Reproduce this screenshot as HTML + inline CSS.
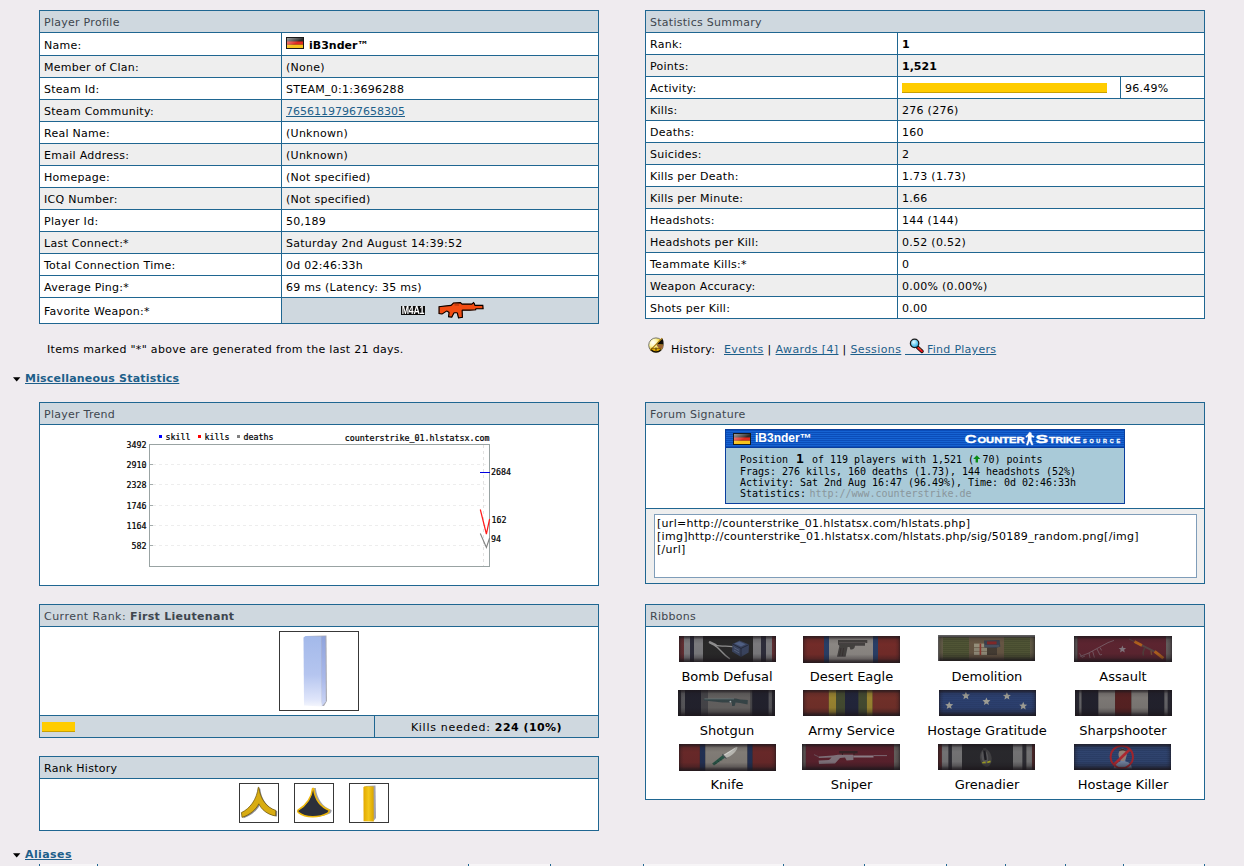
<!DOCTYPE html>
<html lang="en"><head><meta charset="utf-8"><title>Player Details</title>
<style>
html,body{margin:0;padding:0;}
body{width:1244px;height:866px;overflow:hidden;background:#efebef;position:relative;
 font-family:"DejaVu Sans","Liberation Sans",sans-serif;font-size:11px;color:#000;}
.r{position:absolute;}
.t,.h,.b,.rb{position:absolute;white-space:nowrap;line-height:13px;font-size:11px;letter-spacing:0.27px;}
.h{color:#3e464e;}
.b{font-weight:bold;letter-spacing:0;}
.rb{font-size:13px;line-height:16px;letter-spacing:0;text-align:center;}
a{color:#1d5f8a;text-decoration:underline;}
svg{position:absolute;overflow:visible;}
.m{font-family:"DejaVu Sans Mono","Liberation Mono",monospace;}
</style></head><body>

<div class="r" style="left:39px;top:10px;width:560px;height:314px;background:#1f6691;"></div>
<div class="r" style="left:40px;top:11px;width:558px;height:21px;background:#cfd8df;"></div>
<div class="h" style="left:44px;top:16px;">Player Profile</div>
<div class="r" style="left:40px;top:33px;width:241px;height:22px;background:#ffffff;"></div>
<div class="r" style="left:282px;top:33px;width:316px;height:22px;background:#ffffff;"></div>
<div class="t" style="left:44px;top:39px;">Name:</div>
<div class="r" style="left:40px;top:56px;width:241px;height:21px;background:#eeeeee;"></div>
<div class="r" style="left:282px;top:56px;width:316px;height:21px;background:#eeeeee;"></div>
<div class="t" style="left:44px;top:61px;">Member of Clan:</div>
<div class="t" style="left:286px;top:61px;">(None)</div>
<div class="r" style="left:40px;top:78px;width:241px;height:21px;background:#ffffff;"></div>
<div class="r" style="left:282px;top:78px;width:316px;height:21px;background:#ffffff;"></div>
<div class="t" style="left:44px;top:83px;">Steam Id:</div>
<div class="t" style="left:286px;top:83px;">STEAM_0:1:3696288</div>
<div class="r" style="left:40px;top:100px;width:241px;height:21px;background:#eeeeee;"></div>
<div class="r" style="left:282px;top:100px;width:316px;height:21px;background:#eeeeee;"></div>
<div class="t" style="left:44px;top:105px;">Steam Community:</div>
<div class="t" style="left:286px;top:105px;"><a style="letter-spacing:0">76561197967658305</a></div>
<div class="r" style="left:40px;top:122px;width:241px;height:21px;background:#ffffff;"></div>
<div class="r" style="left:282px;top:122px;width:316px;height:21px;background:#ffffff;"></div>
<div class="t" style="left:44px;top:127px;">Real Name:</div>
<div class="t" style="left:286px;top:127px;">(Unknown)</div>
<div class="r" style="left:40px;top:144px;width:241px;height:21px;background:#eeeeee;"></div>
<div class="r" style="left:282px;top:144px;width:316px;height:21px;background:#eeeeee;"></div>
<div class="t" style="left:44px;top:149px;">Email Address:</div>
<div class="t" style="left:286px;top:149px;">(Unknown)</div>
<div class="r" style="left:40px;top:166px;width:241px;height:21px;background:#ffffff;"></div>
<div class="r" style="left:282px;top:166px;width:316px;height:21px;background:#ffffff;"></div>
<div class="t" style="left:44px;top:171px;">Homepage:</div>
<div class="t" style="left:286px;top:171px;">(Not specified)</div>
<div class="r" style="left:40px;top:188px;width:241px;height:21px;background:#eeeeee;"></div>
<div class="r" style="left:282px;top:188px;width:316px;height:21px;background:#eeeeee;"></div>
<div class="t" style="left:44px;top:193px;">ICQ Number:</div>
<div class="t" style="left:286px;top:193px;">(Not specified)</div>
<div class="r" style="left:40px;top:210px;width:241px;height:21px;background:#ffffff;"></div>
<div class="r" style="left:282px;top:210px;width:316px;height:21px;background:#ffffff;"></div>
<div class="t" style="left:44px;top:215px;">Player Id:</div>
<div class="t" style="left:286px;top:215px;">50,189</div>
<div class="r" style="left:40px;top:232px;width:241px;height:21px;background:#eeeeee;"></div>
<div class="r" style="left:282px;top:232px;width:316px;height:21px;background:#eeeeee;"></div>
<div class="t" style="left:44px;top:237px;">Last Connect:*</div>
<div class="t" style="left:286px;top:237px;">Saturday 2nd August 14:39:52</div>
<div class="r" style="left:40px;top:254px;width:241px;height:21px;background:#ffffff;"></div>
<div class="r" style="left:282px;top:254px;width:316px;height:21px;background:#ffffff;"></div>
<div class="t" style="left:44px;top:259px;">Total Connection Time:</div>
<div class="t" style="left:286px;top:259px;">0d 02:46:33h</div>
<div class="r" style="left:40px;top:276px;width:241px;height:21px;background:#ffffff;"></div>
<div class="r" style="left:282px;top:276px;width:316px;height:21px;background:#ffffff;"></div>
<div class="t" style="left:44px;top:281px;">Average Ping:*</div>
<div class="t" style="left:286px;top:281px;">69 ms (Latency: 35 ms)</div>
<div class="r" style="left:40px;top:298px;width:241px;height:25px;background:#ffffff;"></div>
<div class="r" style="left:282px;top:298px;width:316px;height:25px;background:#cfd8df;"></div>
<div class="t" style="left:44px;top:305px;">Favorite Weapon:*</div>
<svg id="flag1" style="left:286px;top:37px" width="18" height="12" viewBox="0 0 18 12"><defs><linearGradient id="gl" x1="0" y1="0" x2="1" y2="1"><stop offset="0" stop-color="#fff" stop-opacity=".55"/><stop offset=".45" stop-color="#fff" stop-opacity=".12"/><stop offset=".55" stop-color="#fff" stop-opacity="0"/></linearGradient></defs><rect width="18" height="12" fill="#1a1a1a"/><rect x="1" y="1" width="16" height="3.4" fill="#2b2b2b"/><rect x="1" y="4.4" width="16" height="3.3" fill="#e02a20"/><rect x="1" y="7.7" width="16" height="3.3" fill="#f6c21c"/><rect x="1" y="1" width="16" height="10" fill="url(#gl)"/></svg>
<div class="b" style="left:309px;top:39px;">iB3nder™</div>
<div class="r" style="left:401px;top:306px;width:24px;height:9px;background:#0c0c0c;"></div>
<div class="b" style="left:393px;top:304px;width:40px;text-align:center;color:#fff;font-family:'Liberation Sans',sans-serif;font-size:11px;line-height:13px;letter-spacing:-0.3px;transform:scaleX(0.8);">M4A1</div>
<svg style="left:438px;top:301px" width="47" height="19" viewBox="0 0 47 19"><clipPath id="rc"><path d="M0.5,5.2 L13.0,3.8 L15.2,1.4 L22.7,1.0 L24.1,2.5 L33.8,2.5 L35.6,0.7 L37.1,2.8 L37.1,3.8 L45.3,3.8 L45.7,8.3 L38.2,8.3 L38.2,9.3 L32.0,9.7 L24.7,9.7 L25.0,16.8 L20.1,17.6 L18.8,12.3 L16.4,12.3 L14.1,16.8 L9.9,16.2 L10.5,11.8 L8.8,10.6 L4.2,13.6 L0.5,13.1 Z"/></clipPath><path d="M0.5,5.2 L13.0,3.8 L15.2,1.4 L22.7,1.0 L24.1,2.5 L33.8,2.5 L35.6,0.7 L37.1,2.8 L37.1,3.8 L45.3,3.8 L45.7,8.3 L38.2,8.3 L38.2,9.3 L32.0,9.7 L24.7,9.7 L25.0,16.8 L20.1,17.6 L18.8,12.3 L16.4,12.3 L14.1,16.8 L9.9,16.2 L10.5,11.8 L8.8,10.6 L4.2,13.6 L0.5,13.1 Z" fill="#f24c12" stroke="#000" stroke-width="2.3" stroke-linejoin="round" clip-path="url(#rc)"/><path d="M16.5,3.9 l4.5,0.1" stroke="#8a2a08" stroke-width="0.8"/></svg>
<div class="t" style="left:47px;top:343px;letter-spacing:0.31px;">Items marked "*" above are generated from the last 21 days.</div>
<div class="r" style="left:645px;top:10px;width:560px;height:309px;background:#1f6691;"></div>
<div class="r" style="left:646px;top:11px;width:558px;height:21px;background:#cfd8df;"></div>
<div class="h" style="left:650px;top:16px;">Statistics Summary</div>
<div class="r" style="left:646px;top:33px;width:251px;height:21px;background:#ffffff;"></div>
<div class="r" style="left:898px;top:33px;width:306px;height:21px;background:#ffffff;"></div>
<div class="t" style="left:650px;top:38px;">Rank:</div>
<div class="t" style="left:902px;top:38px;letter-spacing:0;"><b>1</b></div>
<div class="r" style="left:646px;top:55px;width:251px;height:21px;background:#eeeeee;"></div>
<div class="r" style="left:898px;top:55px;width:306px;height:21px;background:#eeeeee;"></div>
<div class="t" style="left:650px;top:60px;">Points:</div>
<div class="t" style="left:902px;top:60px;letter-spacing:0;"><b>1,521</b></div>
<div class="r" style="left:646px;top:77px;width:251px;height:21px;background:#ffffff;"></div>
<div class="r" style="left:898px;top:77px;width:306px;height:21px;background:#ffffff;"></div>
<div class="t" style="left:650px;top:82px;">Activity:</div>
<div class="r" style="left:646px;top:99px;width:251px;height:21px;background:#eeeeee;"></div>
<div class="r" style="left:898px;top:99px;width:306px;height:21px;background:#eeeeee;"></div>
<div class="t" style="left:650px;top:104px;">Kills:</div>
<div class="t" style="left:902px;top:104px;letter-spacing:0.27px;">276 (276)</div>
<div class="r" style="left:646px;top:121px;width:251px;height:21px;background:#ffffff;"></div>
<div class="r" style="left:898px;top:121px;width:306px;height:21px;background:#ffffff;"></div>
<div class="t" style="left:650px;top:126px;">Deaths:</div>
<div class="t" style="left:902px;top:126px;letter-spacing:0.27px;">160</div>
<div class="r" style="left:646px;top:143px;width:251px;height:21px;background:#eeeeee;"></div>
<div class="r" style="left:898px;top:143px;width:306px;height:21px;background:#eeeeee;"></div>
<div class="t" style="left:650px;top:148px;">Suicides:</div>
<div class="t" style="left:902px;top:148px;letter-spacing:0.27px;">2</div>
<div class="r" style="left:646px;top:165px;width:251px;height:21px;background:#ffffff;"></div>
<div class="r" style="left:898px;top:165px;width:306px;height:21px;background:#ffffff;"></div>
<div class="t" style="left:650px;top:170px;">Kills per Death:</div>
<div class="t" style="left:902px;top:170px;letter-spacing:0.27px;">1.73 (1.73)</div>
<div class="r" style="left:646px;top:187px;width:251px;height:21px;background:#eeeeee;"></div>
<div class="r" style="left:898px;top:187px;width:306px;height:21px;background:#eeeeee;"></div>
<div class="t" style="left:650px;top:192px;">Kills per Minute:</div>
<div class="t" style="left:902px;top:192px;letter-spacing:0.27px;">1.66</div>
<div class="r" style="left:646px;top:209px;width:251px;height:21px;background:#ffffff;"></div>
<div class="r" style="left:898px;top:209px;width:306px;height:21px;background:#ffffff;"></div>
<div class="t" style="left:650px;top:214px;">Headshots:</div>
<div class="t" style="left:902px;top:214px;letter-spacing:0.27px;">144 (144)</div>
<div class="r" style="left:646px;top:231px;width:251px;height:21px;background:#eeeeee;"></div>
<div class="r" style="left:898px;top:231px;width:306px;height:21px;background:#eeeeee;"></div>
<div class="t" style="left:650px;top:236px;">Headshots per Kill:</div>
<div class="t" style="left:902px;top:236px;letter-spacing:0.27px;">0.52 (0.52)</div>
<div class="r" style="left:646px;top:253px;width:251px;height:21px;background:#ffffff;"></div>
<div class="r" style="left:898px;top:253px;width:306px;height:21px;background:#ffffff;"></div>
<div class="t" style="left:650px;top:258px;">Teammate Kills:*</div>
<div class="t" style="left:902px;top:258px;letter-spacing:0.27px;">0</div>
<div class="r" style="left:646px;top:275px;width:251px;height:21px;background:#eeeeee;"></div>
<div class="r" style="left:898px;top:275px;width:306px;height:21px;background:#eeeeee;"></div>
<div class="t" style="left:650px;top:280px;">Weapon Accuracy:</div>
<div class="t" style="left:902px;top:280px;letter-spacing:0.27px;">0.00% (0.00%)</div>
<div class="r" style="left:646px;top:297px;width:251px;height:21px;background:#ffffff;"></div>
<div class="r" style="left:898px;top:297px;width:306px;height:21px;background:#ffffff;"></div>
<div class="t" style="left:650px;top:302px;">Shots per Kill:</div>
<div class="t" style="left:902px;top:302px;letter-spacing:0.27px;">0.00</div>
<div class="r" style="left:1120px;top:77px;width:1px;height:21px;background:#1f6691;"></div>
<div class="r" style="left:902px;top:83px;width:205px;height:10px;background:#ffcc00;border-bottom:1px solid #c9a000;box-sizing:border-box;"></div>
<div class="t" style="left:1125px;top:82px;">96.49%</div>
<svg style="left:648px;top:336.5px" width="16" height="16" viewBox="0 0 16 16"><defs><radialGradient id="hg" cx=".3" cy=".32" r=".75"><stop offset="0" stop-color="#ffffff"/><stop offset=".35" stop-color="#fdf7b0"/><stop offset=".7" stop-color="#f0cc20"/><stop offset="1" stop-color="#b88408"/></radialGradient></defs><circle cx="8" cy="8.2" r="7.3" fill="url(#hg)" stroke="#77776e" stroke-width="1"/><path d="M14.4,1.4 L8.4,7.6 L15.4,7.6 A7.3 7.3 0 0 0 14.4,1.4Z" fill="#100c06"/><path d="M8.4,7.7 L15.3,7.7 A7.3 7.3 0 0 1 12.4,13.6 Z" fill="#9c6434"/><path d="M2.2,13.4 L14.2,1.2" stroke="#a87808" stroke-width="1.1"/><path d="M2,11.6 L8,12.4 L14,11.6 A7.3 7.3 0 0 1 2,11.6 Z" fill="#e0a800"/><path d="M3,12.6 A6.6 6.6 0 0 0 13,12.6" stroke="#181000" stroke-width="1.4" fill="none"/><path d="M8,10.6 L8,13.6" stroke="#2a1c00" stroke-width="1"/><path d="M3,11.4 L13,11.4" stroke="#7a5200" stroke-width=".8"/></svg>
<div class="t" style="left:671px;top:343px;">History:</div>
<div class="t" style="left:724px;top:343px;letter-spacing:0.4px;"><a>Events</a> | <a>Awards [4]</a> | <a>Sessions</a></div>
<div class="t" style="left:927px;top:343px;"><a>Find Players</a></div>
<div class="r" style="left:905px;top:354px;width:24px;height:1px;background:#1d5f8a;"></div>
<svg style="left:908px;top:337px" width="17" height="17" viewBox="0 0 17 17"><defs><radialGradient id="mg" cx=".4" cy=".35" r=".7"><stop offset="0" stop-color="#e8fbff"/><stop offset=".6" stop-color="#5ec8ee"/><stop offset="1" stop-color="#2a9ad0"/></radialGradient></defs><path d="M9.6,10.4 L14,14.4" stroke="#111" stroke-width="3.6" stroke-linecap="round"/><path d="M10.2,11 L13.9,14.3" stroke="#e8141c" stroke-width="2" stroke-linecap="round"/><path d="M10.6,10.6 L13.6,13.2" stroke="#ffb400" stroke-width=".7" stroke-dasharray="1 1"/><circle cx="6.6" cy="6.4" r="4.2" fill="url(#mg)" stroke="#1a1a1a" stroke-width="1.3"/></svg>
<svg style="left:13px;top:377px" width="8" height="5" viewBox="0 0 8 5"><path d="M0,0.2 L7.4,0.2 L3.7,4.6Z" fill="#000"/></svg>
<div class="b" style="left:25px;top:372px;letter-spacing:0.2px;"><a>Miscellaneous Statistics</a></div>
<svg style="left:13px;top:853px" width="8" height="5" viewBox="0 0 8 5"><path d="M0,0.2 L7.4,0.2 L3.7,4.6Z" fill="#000"/></svg>
<div class="b" style="left:25px;top:848px;letter-spacing:0.4px;"><a>Aliases</a></div>
<div class="r" style="left:39px;top:402px;width:560px;height:184px;background:#1f6691;"></div>
<div class="r" style="left:40px;top:403px;width:558px;height:21px;background:#cfd8df;"></div>
<div class="h" style="left:44px;top:408px;">Player Trend</div>
<div class="r" style="left:40px;top:425px;width:558px;height:160px;background:#ffffff;"></div>
<svg id="chart" style="left:40px;top:425px" width="558" height="160" viewBox="40 425 558 160" font-family="'DejaVu Sans Mono','Liberation Mono',monospace" font-size="8.3" font-weight="normal" fill="#000" stroke="#000" stroke-width=".22" letter-spacing="0"><path d="M153,464.5 H489" stroke="#ededed" stroke-width="1" stroke-dasharray="3 3"/><path d="M150,464.5 H153" stroke="#a4acac" stroke-width="1"/><path d="M153,484.5 H489" stroke="#ededed" stroke-width="1" stroke-dasharray="3 3"/><path d="M150,484.5 H153" stroke="#a4acac" stroke-width="1"/><path d="M153,505.5 H489" stroke="#ededed" stroke-width="1" stroke-dasharray="3 3"/><path d="M150,505.5 H153" stroke="#a4acac" stroke-width="1"/><path d="M153,525.5 H489" stroke="#ededed" stroke-width="1" stroke-dasharray="3 3"/><path d="M150,525.5 H153" stroke="#a4acac" stroke-width="1"/><path d="M153,545.5 H489" stroke="#ededed" stroke-width="1" stroke-dasharray="3 3"/><path d="M150,545.5 H153" stroke="#a4acac" stroke-width="1"/><path d="M483.5,445 V566" stroke="#e2e2e2" stroke-width="1" stroke-dasharray="3 3"/><rect x="149.5" y="444.5" width="340" height="122" fill="none" stroke="#99a3a3" stroke-width="1"/><text x="146.5" y="448" text-anchor="end">3492</text><text x="146.5" y="468" text-anchor="end">2910</text><text x="146.5" y="488" text-anchor="end">2328</text><text x="146.5" y="509" text-anchor="end">1746</text><text x="146.5" y="529" text-anchor="end">1164</text><text x="146.5" y="549" text-anchor="end">582</text><rect x="159" y="435" width="3" height="3" fill="#0000ff" stroke="none"/><text x="165.5" y="440">skill</text><rect x="198" y="435" width="3" height="3" fill="#ff0000" stroke="none"/><text x="204.5" y="440">kills</text><rect x="237" y="435" width="3" height="3" fill="#808080" stroke="none"/><text x="243.5" y="440">deaths</text><text x="489.5" y="441" text-anchor="end">counterstrike_01.hlstatsx.com</text><path d="M480,472.5 H490" stroke="#0000e0" stroke-width="1"/><text x="491" y="475">2684</text><path d="M480.3,509.5 L486.4,534 L489.6,519" stroke="#ff1a1a" stroke-width="1.2" fill="none"/><text x="491.5" y="522.6">162</text><path d="M480.3,533.5 L486.4,547.5 L489.6,538" stroke="#808080" stroke-width="1.1" fill="none"/><text x="491" y="541.5">94</text></svg>
<div class="r" style="left:645px;top:402px;width:560px;height:182px;background:#1f6691;"></div>
<div class="r" style="left:646px;top:403px;width:558px;height:21px;background:#cfd8df;"></div>
<div class="h" style="left:650px;top:408px;">Forum Signature</div>
<div class="r" style="left:646px;top:425px;width:558px;height:83px;background:#ffffff;"></div>
<div class="r" style="left:646px;top:509px;width:558px;height:74px;background:#eeeeee;"></div>
<div class="r" id="sig" style="left:725px;top:429px;width:400px;height:75px;background:#a9cad8;box-sizing:border-box;border:1px solid #0a3f9e;"></div><div class="r" style="left:726px;top:430px;width:398px;height:18px;background:repeating-linear-gradient(180deg,#0b4db9 0,#0b4db9 1px,#1663d2 1px,#1663d2 2px);border-bottom:1px solid #083c9c;box-sizing:border-box;"></div>
<svg style="left:733px;top:433px" width="18" height="12" viewBox="0 0 18 12"><rect width="18" height="12" fill="#1a1a1a"/><rect x="1" y="1" width="16" height="3.4" fill="#2b2b2b"/><rect x="1" y="4.4" width="16" height="3.3" fill="#e02a20"/><rect x="1" y="7.7" width="16" height="3.3" fill="#f6c21c"/><rect x="1" y="1" width="16" height="10" fill="url(#gl)"/></svg>
<div class="r" style="left:755px;top:431px;line-height:15px;font-family:'Liberation Sans',sans-serif;font-size:12px;font-weight:bold;color:#fff;white-space:nowrap;">iB3nder™</div>
<svg id="cslogo" style="left:960px;top:430px" width="164" height="18" viewBox="960 430 164 18" font-family="'Liberation Sans',sans-serif" font-weight="bold" fill="#fff" stroke="#fff" stroke-width=".35"><text x="964.7" y="443.3" font-size="11.7" textLength="11.8" lengthAdjust="spacingAndGlyphs">C</text><text x="977.4" y="443.3" font-size="8.4" textLength="47.3" lengthAdjust="spacingAndGlyphs">OUNTER</text><path d="M1029.2,432.2 l2,0.5 l0.5,2.2 l2.6,1.6 l-0.6,1 l-2.2,-0.8 l-0.2,2.6 l1.8,5.4 l-1.5,0.4 l-2,-4.4 l-1.8,4.6 l-1.5,-0.3 l1.8,-5.8 l-0.2,-3.2 l-1.6,1.4 l-0.6,-0.8 l2.6,-2.6 Z" fill="#fff"/><text x="1035.6" y="443.3" font-size="11.7" textLength="12.6" lengthAdjust="spacingAndGlyphs">S</text><text x="1049" y="443.3" font-size="8.4" textLength="31.4" lengthAdjust="spacingAndGlyphs">TRIKE</text><text x="1083" y="443.3" font-size="5.4" textLength="37" lengthAdjust="spacing" fill="#dce8fb">SOURCE</text></svg>
<div class="r" style="left:740px;font-family:'DejaVu Sans Mono','Liberation Mono',monospace;font-size:10px;line-height:11px;letter-spacing:-0.02px;white-space:pre;color:#000;top:453px;">Position <span style="font-size:13px;font-weight:bold;line-height:11px;display:inline-block;width:12px;text-align:center;vertical-align:baseline;letter-spacing:0">1</span> of 119 players with 1,521 (<span style="display:inline-block;width:8.5px"></span>70) points</div>
<svg style="left:973px;top:455px" width="8" height="8" viewBox="0 0 8 8"><path d="M3.8,0.2 L7.4,3.9 L5,3.9 L5,7.4 L2.6,7.4 L2.6,3.9 L0.2,3.9 Z" fill="#0a8c14"/></svg>
<div class="r" style="left:740px;font-family:'DejaVu Sans Mono','Liberation Mono',monospace;font-size:10px;line-height:11px;letter-spacing:-0.02px;white-space:pre;color:#000;top:466px;">Frags: 276 kills, 160 deaths (1.73), 144 headshots (52%)</div>
<div class="r" style="left:740px;font-family:'DejaVu Sans Mono','Liberation Mono',monospace;font-size:10px;line-height:11px;letter-spacing:-0.02px;white-space:pre;color:#000;top:477px;">Activity: Sat 2nd Aug 16:47 (96.49%), Time: 0d 02:46:33h</div>
<div class="r" style="left:740px;font-family:'DejaVu Sans Mono','Liberation Mono',monospace;font-size:10px;line-height:11px;letter-spacing:-0.02px;white-space:pre;color:#000;top:488px;">Statistics:<span style="color:#8a969c;margin-left:3.5px">http://www.counterstrike.de</span></div>
<div class="r" style="left:654px;top:514px;width:543px;height:64px;box-sizing:border-box;border:1px solid #7f9db9;background:#fff;"></div>
<div class="t" style="left:657px;top:517px;line-height:13px;white-space:pre;letter-spacing:0.3px;">[url=http://counterstrike_01.hlstatsx.com/hlstats.php]
[img]http://counterstrike_01.hlstatsx.com/hlstats.php/sig/50189_random.png[/img]
[/url]</div>
<div class="r" style="left:39px;top:604px;width:560px;height:134px;background:#1f6691;"></div>
<div class="r" style="left:40px;top:605px;width:558px;height:21px;background:#cfd8df;"></div>
<div class="h" style="left:44px;top:610px;"><span style="letter-spacing:0.47px">Current Rank: </span><b style="letter-spacing:0.3px">First Lieutenant</b></div>
<div class="r" style="left:40px;top:627px;width:558px;height:88px;background:#ffffff;"></div>
<div class="r" style="left:40px;top:716px;width:334px;height:21px;background:#cfd8df;"></div>
<div class="r" style="left:375px;top:716px;width:223px;height:21px;background:#cfd8df;"></div>
<div class="r" style="left:42px;top:722px;width:33px;height:10px;background:#ffcc00;border-bottom:1px solid #c9a000;box-sizing:border-box;"></div>
<div class="t" style="left:375px;top:721px;width:223px;text-align:center;"><span style="letter-spacing:0.7px">Kills needed: </span><b style="letter-spacing:0.45px">224 (10%)</b></div>
<div class="r" style="left:279px;top:631px;width:80px;height:80px;box-sizing:border-box;border:1px solid #383838;background:#fff;"></div>
<svg style="left:280px;top:632px" width="78" height="78" viewBox="280 632 78 78"><defs><linearGradient id="bl" x1="0" y1="0" x2="0" y2="1"><stop offset="0" stop-color="#a3b9ea"/><stop offset=".55" stop-color="#b5c5ef"/><stop offset=".9" stop-color="#dfe5fa"/><stop offset="1" stop-color="#f4f6fd"/></linearGradient><linearGradient id="bs" x1="0" y1="0" x2="0" y2="1"><stop offset="0" stop-color="#8fa3dc"/><stop offset=".6" stop-color="#a9b8ea"/><stop offset="1" stop-color="#cdd6f5"/></linearGradient><filter id="bf" x="-20%" y="-5%" width="140%" height="110%"><feGaussianBlur stdDeviation="0.6"/></filter></defs><path d="M306,636 L326.5,635.6 L327,701 L324,706 L322,706 Z" fill="#8f8f9a" opacity=".75" filter="url(#bf)"/><path d="M303.5,637.4 L305.5,636 L321.5,636.6 L321.8,706.4 L304,705.5 Z" fill="url(#bl)" filter="url(#bf)"/><path d="M321.5,636.6 L325.5,636 L325.8,701.5 L321.8,706.4 Z" fill="url(#bs)"/></svg>
<div class="r" style="left:39px;top:756px;width:560px;height:75px;background:#1f6691;"></div>
<div class="r" style="left:40px;top:757px;width:558px;height:21px;background:#cfd8df;"></div>
<div class="t" style="left:44px;top:762px;">Rank History</div>
<div class="r" style="left:40px;top:779px;width:558px;height:51px;background:#ffffff;"></div>
<div class="r" style="left:239px;top:783px;width:40px;height:40px;box-sizing:border-box;border:1px solid #383838;background:#fff;"></div>
<div class="r" style="left:294px;top:783px;width:40px;height:40px;box-sizing:border-box;border:1px solid #383838;background:#fff;"></div>
<div class="r" style="left:349px;top:783px;width:40px;height:40px;box-sizing:border-box;border:1px solid #383838;background:#fff;"></div>
<svg style="left:240px;top:784px" width="38" height="38" viewBox="240 784 38 38"><defs><filter id="sf"><feGaussianBlur stdDeviation="0.5"/></filter></defs><path d="M260.2,788.6 C261.5,800 268,808.5 277.2,811.2 L277,816.5 C268,815 262.5,810 260,804.5 C257.5,810.5 251.5,815.5 243.6,818.2 L242.8,813.5 C251.5,809.5 258,800.5 259.2,788.2 Z" fill="#70707a" opacity=".8" filter="url(#sf)"/><path d="M258.8,787.2 C260.2,799 266.5,807.5 275.8,810.4 L275.6,816 C266.8,814.4 261.4,809.4 258.8,803.8 C256,809.6 250.2,814.6 242,817.4 L241.4,812.6 C250,808.6 256.8,799.4 258.2,787.4 Z" fill="#d8ac12" stroke="#6a5208" stroke-width=".7"/></svg>
<svg style="left:295px;top:784px" width="38" height="38" viewBox="295 784 38 38"><path d="M315.8,788 C317,799 322.5,806.5 331.6,810 C331.6,812 331,813 330,813.6 C322,817.5 310,818.5 300,813 C302,806 312,800 314,788 Z" fill="#8a8a96" opacity=".8" filter="url(#sf)"/><path d="M313.6,788.4 C315,799.5 320.5,807 329.4,810.2 C329,812 328.6,812.6 327.6,813.2 C319,818 306,818.4 298.2,812.4 C297.6,811.6 297.6,810.8 298,810.2 C306,805.5 311.4,799.5 312.6,788.4 Z" fill="#2b2f3a" stroke="#efb80a" stroke-width="1.5" stroke-linejoin="round"/></svg>
<svg style="left:350px;top:784px" width="38" height="38" viewBox="350 784 38 38"><defs><linearGradient id="gb" x1="0" y1="0" x2="1" y2="0"><stop offset="0" stop-color="#e2a800"/><stop offset=".5" stop-color="#f3c81a"/><stop offset="1" stop-color="#d9a400"/></linearGradient></defs><path d="M365.5,786 L375.5,785.6 L376,818 L373.6,821" fill="#8c8c98" opacity=".8" filter="url(#sf)"/><path d="M363.4,787.2 L364.6,786.2 L373.6,786.6 L373.8,821.6 L363.6,821.2 Z" fill="url(#gb)"/></svg>
<div class="r" style="left:40px;top:864px;width:57px;height:2px;background:#f7f5f7;"></div>
<div class="r" style="left:469px;top:864px;width:81px;height:2px;background:#f7f5f7;"></div>
<div class="r" style="left:644px;top:864px;width:139px;height:2px;background:#f7f5f7;"></div>
<div class="r" style="left:865px;top:864px;width:81px;height:2px;background:#f7f5f7;"></div>
<div class="r" style="left:1124px;top:864px;width:80px;height:2px;background:#f7f5f7;"></div>
<div class="r" style="left:39px;top:864px;width:1px;height:2px;background:#1f6691;"></div>
<div class="r" style="left:97px;top:864px;width:1px;height:2px;background:#1f6691;"></div>
<div class="r" style="left:468px;top:864px;width:1px;height:2px;background:#1f6691;"></div>
<div class="r" style="left:550px;top:864px;width:1px;height:2px;background:#1f6691;"></div>
<div class="r" style="left:643px;top:864px;width:1px;height:2px;background:#1f6691;"></div>
<div class="r" style="left:783px;top:864px;width:1px;height:2px;background:#1f6691;"></div>
<div class="r" style="left:864px;top:864px;width:1px;height:2px;background:#1f6691;"></div>
<div class="r" style="left:946px;top:864px;width:1px;height:2px;background:#1f6691;"></div>
<div class="r" style="left:1005px;top:864px;width:1px;height:2px;background:#1f6691;"></div>
<div class="r" style="left:1065px;top:864px;width:1px;height:2px;background:#1f6691;"></div>
<div class="r" style="left:1123px;top:864px;width:1px;height:2px;background:#1f6691;"></div>
<div class="r" style="left:1204px;top:864px;width:1px;height:2px;background:#1f6691;"></div>
<div class="r" style="left:645px;top:604px;width:560px;height:196px;background:#1f6691;"></div>
<div class="r" style="left:646px;top:605px;width:558px;height:21px;background:#cfd8df;"></div>
<div class="h" style="left:650px;top:610px;">Ribbons</div>
<div class="r" style="left:646px;top:627px;width:558px;height:172px;background:#ffffff;"></div>
<svg width="0" height="0" style="left:0;top:0"><defs><linearGradient id="rsh" x1="0" y1="0" x2="0" y2="1"><stop offset="0" stop-color="#1c171c" stop-opacity=".8"/><stop offset=".06" stop-color="#1c171c" stop-opacity=".62"/><stop offset=".14" stop-color="#1c171c" stop-opacity=".22"/><stop offset=".3" stop-color="#1c171c" stop-opacity=".1"/><stop offset=".68" stop-color="#1c171c" stop-opacity=".14"/><stop offset=".84" stop-color="#1c171c" stop-opacity=".4"/><stop offset=".92" stop-color="#1c171c" stop-opacity=".72"/><stop offset="1" stop-color="#1c171c" stop-opacity=".9"/></linearGradient><linearGradient id="rsx" x1="0" y1="0" x2="1" y2="0"><stop offset="0" stop-color="#1c171c" stop-opacity=".6"/><stop offset=".02" stop-color="#1c171c" stop-opacity=".2"/><stop offset=".05" stop-color="#1c171c" stop-opacity="0"/><stop offset=".95" stop-color="#1c171c" stop-opacity="0"/><stop offset=".98" stop-color="#1c171c" stop-opacity=".2"/><stop offset="1" stop-color="#1c171c" stop-opacity=".6"/></linearGradient><filter id="rb"><feGaussianBlur stdDeviation="0.5"/></filter><filter id="rb2"><feGaussianBlur stdDeviation="0.35"/></filter></defs></svg>
<svg style="left:679px;top:636px" width="97" height="26" viewBox="0 0 97 26"><clipPath id="c679_636"><rect width="97" height="26"/></clipPath><g clip-path="url(#c679_636)"><rect width="97" height="26" fill="#333"/><g filter="url(#rb)"><rect x="0" y="-2" width="5" height="30" fill="#6d3036"/><rect x="5" y="-2" width="6" height="30" fill="#858588"/><rect x="11" y="-2" width="4" height="30" fill="#2e2f3e"/><rect x="15" y="-2" width="9" height="30" fill="#858588"/><rect x="24" y="-2" width="50" height="30" fill="#2b292b"/><rect x="74" y="-2" width="8" height="30" fill="#858588"/><rect x="82" y="-2" width="5" height="30" fill="#2e2f3e"/><rect x="87" y="-2" width="6" height="30" fill="#858588"/><rect x="93" y="-2" width="4" height="30" fill="#6d3036"/></g><g filter="url(#rb2)"><g fill="none" stroke="#9c9c9c" stroke-linecap="round"><path d="M31,6.4 L36.5,9.2" stroke-width="2.6"/><path d="M36,9.6 C41,12.5 43.5,18 50.5,22.6" stroke-width="1.4"/><path d="M36.5,9.4 C42,10.4 49,10 53,10.6 C56,11 58,12.6 60,13.4" stroke-width="1.3"/></g><path d="M53.5,8 L60.5,4.4 L70,8.6 L69.6,16.4 L62,21 L53,15.6 Z" fill="#3d4966"/><path d="M53.5,8 L62,12.4 L70,8.6 M62,12.4 L62,21" stroke="#262c40" stroke-width="1" fill="none"/><path d="M55.5,7.6 L60.5,5.4 L66.5,8.2 L62,10.4Z" fill="#56688f"/><path d="M55,11.6 L60,14.4 M55,14 L60,16.8" stroke="#6a7898" stroke-width=".7"/></g><rect width="97" height="26" fill="url(#rsh)"/><rect width="97" height="26" fill="url(#rsx)"/></g></svg>
<svg style="left:803px;top:636px" width="97" height="27" viewBox="0 0 97 27"><clipPath id="c803_636"><rect width="97" height="27"/></clipPath><g clip-path="url(#c803_636)"><rect width="97" height="27" fill="#333"/><g filter="url(#rb)"><rect x="0" y="-2" width="21" height="31" fill="#7c2d2c"/><rect x="21" y="-2" width="5" height="31" fill="#2b426e"/><rect x="26" y="-2" width="44" height="31" fill="#97938e"/><rect x="70" y="-2" width="5" height="31" fill="#2b426e"/><rect x="75" y="-2" width="22" height="31" fill="#7c2d2c"/></g><g filter="url(#rb2)"><path d="M35,4 L64.3,4 L64.3,7 L62,7 L62,9.8 L52,9.8 C51.6,12.6 50.6,13.6 47.4,13.4 L46.6,11 L44.6,11 L42.6,20.8 L34,20.8 L36.4,9.8 L35,8.6 Z" fill="#474443"/><path d="M36,6.6 H63" stroke="#6a6663" stroke-width=".7"/><path d="M38,12 L36.6,19.6 M40.6,12 L39.4,19.8" stroke="#38312f" stroke-width=".8"/></g><rect width="97" height="27" fill="url(#rsh)"/><rect width="97" height="27" fill="url(#rsx)"/></g></svg>
<svg style="left:938px;top:635px" width="97" height="26" viewBox="0 0 97 26"><clipPath id="c938_635"><rect width="97" height="26"/></clipPath><g clip-path="url(#c938_635)"><rect width="97" height="26" fill="#333"/><g filter="url(#rb)"><rect x="0" y="-2" width="5" height="30" fill="#6a634c"/><rect x="5" y="-2" width="26" height="30" fill="#565c38"/><rect x="31" y="-2" width="35" height="30" fill="#6d5b46"/><rect x="66" y="-2" width="26" height="30" fill="#565c38"/><rect x="92" y="-2" width="5" height="30" fill="#6a634c"/></g><g stroke="#454a2c" stroke-width=".6" opacity="0.8"><path d="M5,2.5 H31"/><path d="M5,4.5 H31"/><path d="M5,6.5 H31"/><path d="M5,8.5 H31"/><path d="M5,10.5 H31"/><path d="M5,12.5 H31"/><path d="M5,14.5 H31"/><path d="M5,16.5 H31"/><path d="M5,18.5 H31"/><path d="M5,20.5 H31"/><path d="M5,22.5 H31"/><path d="M5,24.5 H31"/></g><g stroke="#454a2c" stroke-width=".6" opacity="0.8"><path d="M66,2.5 H92"/><path d="M66,4.5 H92"/><path d="M66,6.5 H92"/><path d="M66,8.5 H92"/><path d="M66,10.5 H92"/><path d="M66,12.5 H92"/><path d="M66,14.5 H92"/><path d="M66,16.5 H92"/><path d="M66,18.5 H92"/><path d="M66,20.5 H92"/><path d="M66,22.5 H92"/><path d="M66,24.5 H92"/></g><rect x="0" y="0" width="97" height="2.2" fill="#5a5a58"/><g filter="url(#rb2)"><g><rect x="36" y="8.6" width="13" height="3.4" fill="#a39d86"/><rect x="36" y="12.6" width="13" height="3.4" fill="#9a947e"/><rect x="36" y="16.6" width="13" height="3.4" fill="#a09a84"/><rect x="41.6" y="8.6" width="1.6" height="11.4" fill="#9a3a30"/><rect x="49" y="13" width="10" height="7" fill="#4a4036"/><path d="M46,5.4 L61.6,5 L62.4,11.6 L58,13 L46.4,12.4 Z" fill="#3c4452"/><rect x="49" y="6.4" width="9.6" height="3" fill="#8a2c2c"/><path d="M47,11 H61" stroke="#6a7484" stroke-width=".8"/></g></g><rect width="97" height="26" fill="url(#rsh)"/><rect width="97" height="26" fill="url(#rsx)"/><rect x="0" y="0" width="97" height="1.6" fill="#707070" opacity=".75"/><rect x="0" y="0" width="1.4" height="26" fill="#6a6a6a" opacity=".6"/></g></svg>
<svg style="left:1074px;top:636px" width="98" height="26" viewBox="0 0 98 26"><clipPath id="c1074_636"><rect width="98" height="26"/></clipPath><g clip-path="url(#c1074_636)"><rect width="98" height="26" fill="#333"/><g filter="url(#rb)"><rect x="0" y="-2" width="3.6" height="30" fill="#6a6462"/><rect x="3.6" y="-2" width="88.4" height="30" fill="#632630"/><rect x="92" y="-2" width="6" height="30" fill="#6a6462"/></g><g filter="url(#rb2)"><g fill="none" stroke="#80606a" stroke-width="1"><path d="M6,20.4 L14,17.4 L34,6.6 L40,4.4"/><path d="M15,17 L16,22 M18.6,15 L20.4,21.6 M23,13 L26,19 L28,18.4 M26,11.6 L27.6,14.4"/><path d="M5.6,17.4 L8,21.4 L11,20"/></g><path d="M48.4,9.4 l1,2.5 2.7,0.2 -2,1.7 0.7,2.6 -2.4,-1.4 -2.4,1.4 0.7,-2.6 -2,-1.7 2.7,-0.2z" fill="#8d8088"/><g><path d="M60.4,5.6 L68,9.4" stroke="#c0691f" stroke-width="2.8" fill="none"/><path d="M68,9.4 L80.6,15.6" stroke="#5e4a48" stroke-width="2"/><path d="M80.6,15.4 L89.4,22.4" stroke="#c0691f" stroke-width="3"/><path d="M71,11.6 C69,15 68.6,17.6 69.6,19.6" stroke="#54403e" stroke-width="1.6" fill="none"/><path d="M77,14.6 L77.6,19" stroke="#7a5438" stroke-width="1.4"/><path d="M55,3 L60.4,5.6" stroke="#5e4a48" stroke-width="1"/></g></g><rect width="98" height="26" fill="url(#rsh)"/><rect width="98" height="26" fill="url(#rsx)"/></g></svg>
<svg style="left:678px;top:690px" width="97" height="26" viewBox="0 0 97 26"><clipPath id="c678_690"><rect width="97" height="26"/></clipPath><g clip-path="url(#c678_690)"><rect width="97" height="26" fill="#333"/><g filter="url(#rb)"><rect x="0" y="-2" width="3" height="30" fill="#2b2b31"/><rect x="3" y="-2" width="4" height="30" fill="#5b5b61"/><rect x="7" y="-2" width="16" height="30" fill="#21212d"/><rect x="23" y="-2" width="7" height="30" fill="#4a4a4e"/><rect x="30" y="-2" width="42.599999999999994" height="30" fill="#6a6866"/><rect x="72.6" y="-2" width="1.8000000000000114" height="30" fill="#4a4a4e"/><rect x="74.4" y="-2" width="16.19999999999999" height="30" fill="#21212d"/><rect x="90.6" y="-2" width="3.4000000000000057" height="30" fill="#5b5b61"/><rect x="94" y="-2" width="3" height="30" fill="#2b2b31"/></g><g filter="url(#rb2)"><path d="M25.8,8.8 L48,8.8 L58,8.6 L62,9.6 L69.8,10 L69.6,14.6 L62,13 L57.6,12.6 L56.6,16 L54,16 L54,12.6 L44,12.6 L40,12 L25.8,10.6 Z" fill="#39484c"/><path d="M26.4,8.9 H56" stroke="#7b8b8c" stroke-width=".7"/><circle cx="52.4" cy="11.6" r=".9" fill="#b8c4c4"/></g><rect width="97" height="26" fill="url(#rsh)"/><rect width="97" height="26" fill="url(#rsx)"/></g></svg>
<svg style="left:803px;top:690px" width="97" height="26" viewBox="0 0 97 26"><clipPath id="c803_690"><rect width="97" height="26"/></clipPath><g clip-path="url(#c803_690)"><rect width="97" height="26" fill="#333"/><g filter="url(#rb)"><rect x="0" y="-2" width="25.8" height="30" fill="#79322a"/><rect x="25.8" y="-2" width="7.199999999999999" height="30" fill="#a58e30"/><rect x="33" y="-2" width="9" height="30" fill="#465030"/><rect x="42" y="-2" width="13.5" height="30" fill="#20283e"/><rect x="55.5" y="-2" width="8.399999999999999" height="30" fill="#465030"/><rect x="63.9" y="-2" width="5.800000000000004" height="30" fill="#a58e30"/><rect x="69.7" y="-2" width="27.299999999999997" height="30" fill="#79322a"/></g><g filter="url(#rb2)"></g><rect width="97" height="26" fill="url(#rsh)"/><rect width="97" height="26" fill="url(#rsx)"/></g></svg>
<svg style="left:939px;top:690px" width="97" height="26" viewBox="0 0 97 26"><clipPath id="c939_690"><rect width="97" height="26"/></clipPath><g clip-path="url(#c939_690)"><rect width="97" height="26" fill="#333"/><g filter="url(#rb)"><rect x="0" y="-2" width="97" height="30" fill="#2d4579"/></g><g stroke="#283d6c" stroke-width=".6" opacity="0.7"><path d="M0,2.5 H97"/><path d="M0,4.5 H97"/><path d="M0,6.5 H97"/><path d="M0,8.5 H97"/><path d="M0,10.5 H97"/><path d="M0,12.5 H97"/><path d="M0,14.5 H97"/><path d="M0,16.5 H97"/><path d="M0,18.5 H97"/><path d="M0,20.5 H97"/><path d="M0,22.5 H97"/><path d="M0,24.5 H97"/></g><g filter="url(#rb2)"><polygon points="26.9,1.6 28.0,4.3 30.9,4.5 28.7,6.4 29.4,9.2 26.9,7.7 24.4,9.2 25.1,6.4 22.9,4.5 25.8,4.3" fill="#aeaea4"/><polygon points="10.2,11.4 11.3,14.1 14.2,14.3 12.0,16.2 12.7,19.0 10.2,17.5 7.7,19.0 8.4,16.2 6.2,14.3 9.1,14.1" fill="#aeaea4"/><polygon points="47.4,7.4 48.5,10.1 51.4,10.3 49.2,12.2 49.9,15.0 47.4,13.5 44.9,15.0 45.6,12.2 43.4,10.3 46.3,10.1" fill="#aeaea4"/><polygon points="67.9,2.0 69.0,4.7 71.9,4.9 69.7,6.8 70.4,9.6 67.9,8.1 65.4,9.6 66.1,6.8 63.9,4.9 66.8,4.7" fill="#aeaea4"/><polygon points="84.2,11.8 85.3,14.5 88.2,14.7 86.0,16.6 86.7,19.4 84.2,17.9 81.7,19.4 82.4,16.6 80.2,14.7 83.1,14.5" fill="#aeaea4"/></g><rect width="97" height="26" fill="url(#rsh)"/><rect width="97" height="26" fill="url(#rsx)"/></g></svg>
<svg style="left:1075px;top:690px" width="97" height="26" viewBox="0 0 97 26"><clipPath id="c1075_690"><rect width="97" height="26"/></clipPath><g clip-path="url(#c1075_690)"><rect width="97" height="26" fill="#333"/><g filter="url(#rb)"><rect x="0" y="-2" width="4.2" height="30" fill="#2c2c34"/><rect x="4.2" y="-2" width="2.5" height="30" fill="#6a6a6e"/><rect x="6.7" y="-2" width="16.7" height="30" fill="#22242e"/><rect x="23.4" y="-2" width="16.700000000000003" height="30" fill="#86827e"/><rect x="40.1" y="-2" width="16.299999999999997" height="30" fill="#5b2424"/><rect x="56.4" y="-2" width="16.699999999999996" height="30" fill="#86827e"/><rect x="73.1" y="-2" width="16.30000000000001" height="30" fill="#22242e"/><rect x="89.4" y="-2" width="3.3999999999999915" height="30" fill="#6a6a6e"/><rect x="92.8" y="-2" width="4.200000000000003" height="30" fill="#2c2c34"/></g><g filter="url(#rb2)"></g><rect width="97" height="26" fill="url(#rsh)"/><rect width="97" height="26" fill="url(#rsx)"/></g></svg>
<svg style="left:679px;top:744px" width="97" height="27" viewBox="0 0 97 27"><clipPath id="c679_744"><rect width="97" height="27"/></clipPath><g clip-path="url(#c679_744)"><rect width="97" height="27" fill="#333"/><g filter="url(#rb)"><rect x="0" y="-2" width="20.9" height="31" fill="#6f2a2a"/><rect x="20.9" y="-2" width="5.400000000000002" height="31" fill="#243258"/><rect x="26.3" y="-2" width="42.2" height="31" fill="#8c8780"/><rect x="68.5" y="-2" width="5.099999999999994" height="31" fill="#243258"/><rect x="73.6" y="-2" width="23.400000000000006" height="31" fill="#6f2a2a"/></g><g filter="url(#rb2)"><path d="M33.2,19.6 L35,21.6 L46.2,13.4 L44.2,10.8 Z" fill="#2a5a4a"/><path d="M36,18.4 L37.4,20 M38.6,16.6 L40,18.2 M41.2,14.8 L42.6,16.4" stroke="#174034" stroke-width=".7"/><path d="M44,11 L57.4,2.8 L58.6,3.2 C57,8.4 52,12.4 46.6,14 Z" fill="#c9c9c2"/><path d="M44.6,11.6 L56,4.4" stroke="#f0f0ec" stroke-width=".8"/><path d="M43.4,10.2 L47.4,14.6" stroke="#50545a" stroke-width="1.1"/></g><rect width="97" height="27" fill="url(#rsh)"/><rect width="97" height="27" fill="url(#rsx)"/></g></svg>
<svg style="left:802px;top:744px" width="98" height="26" viewBox="0 0 98 26"><clipPath id="c802_744"><rect width="98" height="26"/></clipPath><g clip-path="url(#c802_744)"><rect width="98" height="26" fill="#333"/><g filter="url(#rb)"><rect x="0" y="-2" width="3.8" height="30" fill="#6a6460"/><rect x="3.8" y="-2" width="88.2" height="30" fill="#61242e"/><rect x="92" y="-2" width="6" height="30" fill="#6a6460"/></g><g filter="url(#rb2)"><g><path d="M16.6,12.6 L31,11.6 L36,10.8 L51.4,10.8 L51.4,16 L44.6,16.4 L43,13.6 L38,14 L33,19.6 L17,20 L16.6,16.6 L27,16 L29.6,13.6 L16.8,14 Z" fill="#8b7b85"/><path d="M51.4,12.5 H71.5" stroke="#9a8a94" stroke-width="2"/><path d="M71.5,11.6 H85" stroke="#8b7b85" stroke-width=".9"/><path d="M37.2,8.2 H55.6" stroke="#372126" stroke-width="2.4"/><path d="M40.4,9 V11 M52,9 V11" stroke="#372126" stroke-width="1"/><path d="M12,10.6 L16.6,12.8" stroke="#7a6a74" stroke-width=".7"/></g></g><rect width="98" height="26" fill="url(#rsh)"/><rect width="98" height="26" fill="url(#rsx)"/></g></svg>
<svg style="left:938px;top:744px" width="97" height="26" viewBox="0 0 97 26"><clipPath id="c938_744"><rect width="97" height="26"/></clipPath><g clip-path="url(#c938_744)"><rect width="97" height="26" fill="#333"/><g filter="url(#rb)"><rect x="0" y="-2" width="3.9" height="30" fill="#5b2a2a"/><rect x="3.9" y="-2" width="6.699999999999999" height="30" fill="#7b7b7d"/><rect x="10.6" y="-2" width="3.3000000000000007" height="30" fill="#2e2e34"/><rect x="13.9" y="-2" width="10.1" height="30" fill="#7b7b7d"/><rect x="24" y="-2" width="51" height="30" fill="#2c2a2e"/><rect x="75" y="-2" width="9.599999999999994" height="30" fill="#7b7b7d"/><rect x="84.6" y="-2" width="3.8000000000000114" height="30" fill="#2e2e34"/><rect x="88.4" y="-2" width="5.799999999999997" height="30" fill="#7b7b7d"/><rect x="94.2" y="-2" width="2.799999999999997" height="30" fill="#5b2a2a"/></g><g filter="url(#rb2)"><g transform="rotate(-8 47.8 14)"><ellipse cx="47.8" cy="14" rx="5.8" ry="9" fill="#444446"/><ellipse cx="47" cy="13" rx="3.4" ry="6.6" fill="#5c5c5f"/><rect x="46.2" y="6" width="2.4" height="10" fill="#1d1d20"/><rect x="46.4" y="4" width="3.2" height="2.6" fill="#3c3c3e"/><path d="M43.6,18.2 L47,18.4 M48.6,18.6 L52,18" stroke="#b4b424" stroke-width="1.7"/></g></g><rect width="97" height="26" fill="url(#rsh)"/><rect width="97" height="26" fill="url(#rsx)"/></g></svg>
<svg style="left:1074px;top:744px" width="97" height="26" viewBox="0 0 97 26"><clipPath id="c1074_744"><rect width="97" height="26"/></clipPath><g clip-path="url(#c1074_744)"><rect width="97" height="26" fill="#333"/><g filter="url(#rb)"><rect x="0" y="-2" width="97" height="30" fill="#314878"/></g><g stroke="#283c68" stroke-width=".6" opacity="0.9"><path d="M0,2.5 H97"/><path d="M0,4.5 H97"/><path d="M0,6.5 H97"/><path d="M0,8.5 H97"/><path d="M0,10.5 H97"/><path d="M0,12.5 H97"/><path d="M0,14.5 H97"/><path d="M0,16.5 H97"/><path d="M0,18.5 H97"/><path d="M0,20.5 H97"/><path d="M0,22.5 H97"/><path d="M0,24.5 H97"/></g><g filter="url(#rb2)"><path d="M39.6,24.6 C40.6,19.4 43.6,18 46.4,17.4 L46.4,15 C44,12.4 43.8,6.4 48,4.8 C52.4,4.4 53.8,10.4 51.4,15 L51.4,17.4 C55,18 57.4,19.4 58,24.6 Z" fill="#7c90b0"/><path d="M46.2,16 C43.8,12.4 44,6.4 48,4.8 C52.4,4.4 53.8,10.4 51.4,15.2 C50.4,17.4 47.4,17.6 46.2,16Z" fill="#a38c80"/><path d="M44.8,7.4 C45.8,4 51.4,3.6 52.4,7.8 C50.4,6.2 47,6 44.8,7.4Z" fill="#40332d"/><circle cx="47.8" cy="12.9" r="11.2" fill="none" stroke="#b0262e" stroke-width="1.9"/><path d="M39.6,21 L56.2,5" stroke="#bc2a32" stroke-width="2.6"/></g><rect width="97" height="26" fill="url(#rsh)"/><rect width="97" height="26" fill="url(#rsx)"/></g></svg>
<div class="rb" style="left:647px;top:669px;width:160px;">Bomb Defusal</div>
<div class="rb" style="left:647px;top:723px;width:160px;">Shotgun</div>
<div class="rb" style="left:647px;top:777px;width:160px;">Knife</div>
<div class="rb" style="left:771.5px;top:669px;width:160px;">Desert Eagle</div>
<div class="rb" style="left:771.5px;top:723px;width:160px;">Army Service</div>
<div class="rb" style="left:771.5px;top:777px;width:160px;">Sniper</div>
<div class="rb" style="left:907px;top:669px;width:160px;">Demolition</div>
<div class="rb" style="left:907px;top:723px;width:160px;">Hostage Gratitude</div>
<div class="rb" style="left:907px;top:777px;width:160px;">Grenadier</div>
<div class="rb" style="left:1043px;top:669px;width:160px;">Assault</div>
<div class="rb" style="left:1043px;top:723px;width:160px;">Sharpshooter</div>
<div class="rb" style="left:1043px;top:777px;width:160px;">Hostage Killer</div>

</body></html>
